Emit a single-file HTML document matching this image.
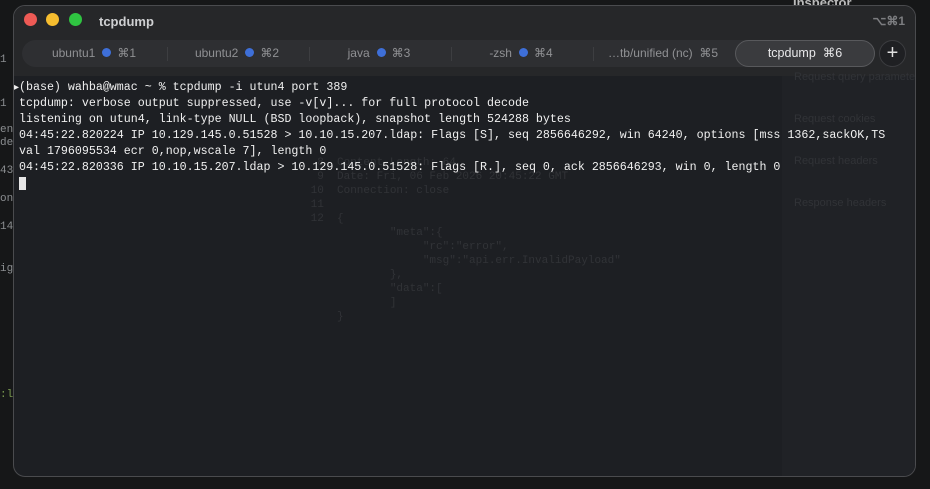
<!DOCTYPE html>
<html><head><meta charset="utf-8"><style>
*{margin:0;padding:0;box-sizing:border-box}
body{width:930px;height:489px;background:#161718;overflow:hidden;position:relative;font-family:"Liberation Sans",sans-serif}
.bgtxt{position:absolute;font-family:"Liberation Mono",monospace;font-size:11px;color:#8a8d90;white-space:pre}
.win{position:absolute;left:13px;top:5px;width:903px;height:472px;border-radius:12px;background:#1d1f23;border:1px solid #4a4b4e;overflow:hidden}
.title{position:absolute;left:0;top:0;width:100%;height:34px;background:#262729}
.tabbar{position:absolute;left:0;top:34px;width:100%;height:36px;background:#262729}
.dot{position:absolute;top:7px;width:13px;height:13px;border-radius:50%}
.ttl{position:absolute;left:85px;top:8px;color:#cfd0d2;font-weight:bold;font-size:13px}
.sc{position:absolute;right:10px;top:8px;color:#7c7d80;font-size:12px;font-weight:bold}
.pill{position:absolute;left:8px;top:0px;width:853px;height:27px;border-radius:14px;background:#2e2f32}
.tab{position:absolute;top:0px;height:27px;line-height:27px;font-size:12px;color:#909194;text-align:center}
.sep{position:absolute;top:7px;width:1px;height:14px;background:#3d3e41}
.bd{display:inline-block;width:9px;height:9px;border-radius:50%;background:#3e6fd8;margin:0 6px 0 7px;vertical-align:0px}
.act{position:absolute;left:721px;top:0px;width:140px;height:27px;border-radius:14px;background:#3a3b3e;border:1px solid #58595c;color:#e8e8ea;font-size:12.5px;text-align:center;line-height:25px}
.plus{position:absolute;left:865px;top:0px;width:27px;height:27px;border-radius:50%;background:#1f2023;border:1px solid #3c3d40;color:#e0e0e0;font-size:20px;text-align:center;line-height:24px}
.term{position:absolute;left:5px;top:74px;font-family:"Liberation Mono",monospace;font-size:11.65px;line-height:16px;color:#f0f0f0;white-space:pre}
.faint{position:absolute;font-family:"Liberation Mono",monospace;font-size:11px;color:#313337;white-space:pre;line-height:14px}
.rp{position:absolute;left:768px;top:70px;width:135px;height:400px;background:#202226}
</style></head><body>
<div class="bgtxt" style="left:0;top:54px">1</div>
<div class="bgtxt" style="left:0;top:98px">1</div>
<div class="bgtxt" style="left:0;top:124px">en</div>
<div class="bgtxt" style="left:0;top:137px">de</div>
<div class="bgtxt" style="left:0;top:165px">43</div>
<div class="bgtxt" style="left:0;top:193px">on</div>
<div class="bgtxt" style="left:0;top:221px">14</div>
<div class="bgtxt" style="left:0;top:263px">ig</div>
<div class="bgtxt" style="left:0;top:389px;color:#7a9a50">:l</div>
<div class="bgtxt" style="left:793px;top:-5px;color:#bbb;font-family:'Liberation Sans';font-weight:bold;font-size:13px">Inspector</div>
<div class="win">
<div class="title">
<div class="dot" style="left:10px;background:#ee5a55"></div>
<div class="dot" style="left:32px;background:#f6bd2f"></div>
<div class="dot" style="left:55px;background:#2fc441"></div>
<div class="ttl">tcpdump</div>
<div class="sc">⌥⌘1</div>
</div>
<div class="tabbar">
<div class="pill"></div>
<div class="tab" style="left:10px;width:140px">ubuntu1<span class="bd"></span>⌘1</div>
<div class="sep" style="left:153px"></div>
<div class="tab" style="left:153px;width:140px">ubuntu2<span class="bd"></span>⌘2</div>
<div class="sep" style="left:295px"></div>
<div class="tab" style="left:295px;width:140px">java<span class="bd"></span>⌘3</div>
<div class="sep" style="left:437px"></div>
<div class="tab" style="left:437px;width:140px">-zsh<span class="bd"></span>⌘4</div>
<div class="sep" style="left:579px"></div>
<div class="tab" style="left:579px;width:140px">…tb/unified (nc)&nbsp; ⌘5</div>
<div class="act">tcpdump&nbsp; ⌘6</div>
<div class="plus">+</div>
</div>
<div class="rp"></div>
<div class="faint" style="left:290px;top:150px">  8  Content-Length: 64
  9  Date: Fri, 06 Feb 2026 20:45:22 GMT
 10  Connection: close
 11
 12  {
             "meta":{
                  "rc":"error",
                  "msg":"api.err.InvalidPayload"
             },
             "data":[
             ]
     }</div>
<div class="faint" style="left:780px;top:64px;font-family:'Liberation Sans'">Request query parameters


Request cookies


Request headers


Response headers</div>
<div style="position:absolute;left:0;top:76px;color:#f0f0f0;font-size:10px">▸</div>
<div class="term">(base) wahba@wmac ~ % tcpdump -i utun4 port 389
tcpdump: verbose output suppressed, use -v[v]... for full protocol decode
listening on utun4, link-type NULL (BSD loopback), snapshot length 524288 bytes
04:45:22.820224 IP 10.129.145.0.51528 &gt; 10.10.15.207.ldap: Flags [S], seq 2856646292, win 64240, options [mss 1362,sackOK,TS
val 1796095534 ecr 0,nop,wscale 7], length 0
04:45:22.820336 IP 10.10.15.207.ldap &gt; 10.129.145.0.51528: Flags [R.], seq 0, ack 2856646293, win 0, length 0
<span style="background:#e6e6e6"> </span></div>
</div>
</body></html>
